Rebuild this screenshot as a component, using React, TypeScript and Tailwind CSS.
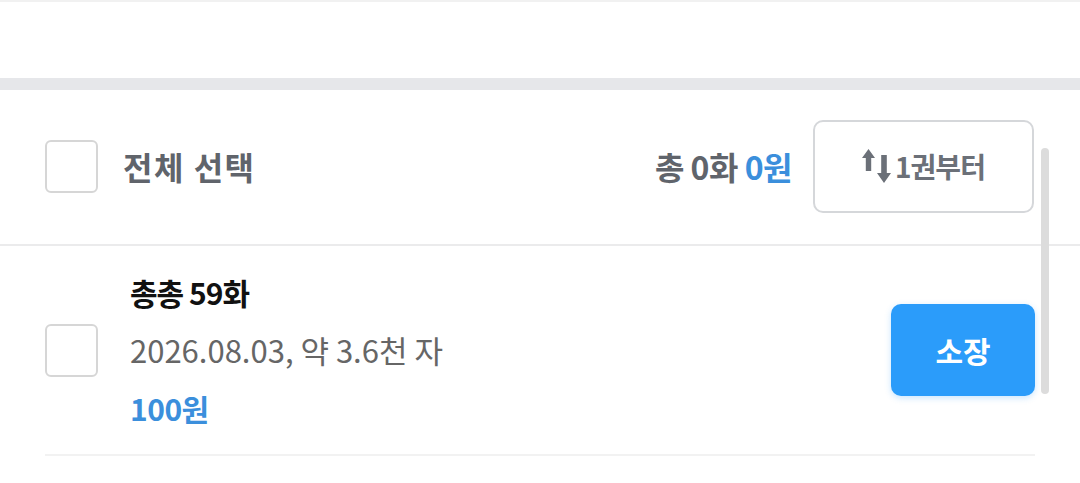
const FONT = "font-['Noto_Sans_CJK_KR','Noto_Sans',sans-serif]";

function SortIcon() {
  return (
    <svg width="30" height="34" viewBox="0 0 30 34" fill="#6b7078">
      <path d="M6.5 0 L13 9 L9.2 9 L9.2 22 L3.8 22 L3.8 9 L0 9 Z" />
      <path d="M22 34 L29 24 L24.8 24 L24.8 6 L19.2 6 L19.2 24 L15 24 Z" />
    </svg>
  );
}

function Checkbox() {
  return (
    <div className="w-[53px] h-[53px] shrink-0 rounded-[6px] border-2 border-[#d6d6d6] bg-white" />
  );
}

export default function App() {
  return (
    <div className={`relative w-[1080px] h-[483px] overflow-hidden bg-white ${FONT}`}>
      {/* top area */}
      <div className="h-[78px] border-t-2 border-[#f1f1f1] bg-white" />
      <div className="h-[12px] bg-[#e6e7ea]" />

      {/* header */}
      <div className="flex items-center h-[156px] pl-[45px] pr-[46px] pb-[2px] border-b-2 border-[#ebebec]">
        <Checkbox />
        <span className="ml-[25px] text-[32px] font-bold tracking-[1.5px] text-[#60646b]">
          전체 선택
        </span>
        <div className="ml-auto flex items-center gap-[21px]">
          <span className="text-[32px] font-bold tracking-[-0.5px] text-[#60646b]">
            총 0화 <span className="text-[#3b8fdc]">0원</span>
          </span>
          <button className="flex items-center justify-center gap-[3px] w-[221px] h-[93px] rounded-[10px] border-2 border-[#d5d7da] bg-white">
            <SortIcon />
            <span className="text-[28px] font-bold tracking-[-1px] text-[#6b7078]">1권부터</span>
          </button>
        </div>
      </div>

      {/* item */}
      <div className="mx-[45px] flex items-center h-[210px] border-b-2 border-[#f2f2f2]">
        <Checkbox />
        <div className="ml-[32px] flex flex-col">
          <span className="text-[30px] leading-[58px] font-bold tracking-[-1px] text-[#111]">총총 59화</span>
          <span className="text-[31px] leading-[58px] text-[#666]">
            2026.08.03, 약 3.6천 자
          </span>
          <span className="text-[30px] leading-[58px] font-bold tracking-[-0.5px] text-[#3b8fdc]">100원</span>
        </div>
        <button className="ml-auto w-[144px] h-[92px] rounded-[10px] bg-[#2b9cfa] text-white text-[30px] font-bold shadow-[0_2px_6px_rgba(43,156,250,0.25)]">
          소장
        </button>
      </div>

      {/* scrollbar */}
      <div className="absolute left-[1041px] top-[148px] w-[8px] h-[246px] rounded-full bg-[#dcdcdc]" />
    </div>
  );
}
